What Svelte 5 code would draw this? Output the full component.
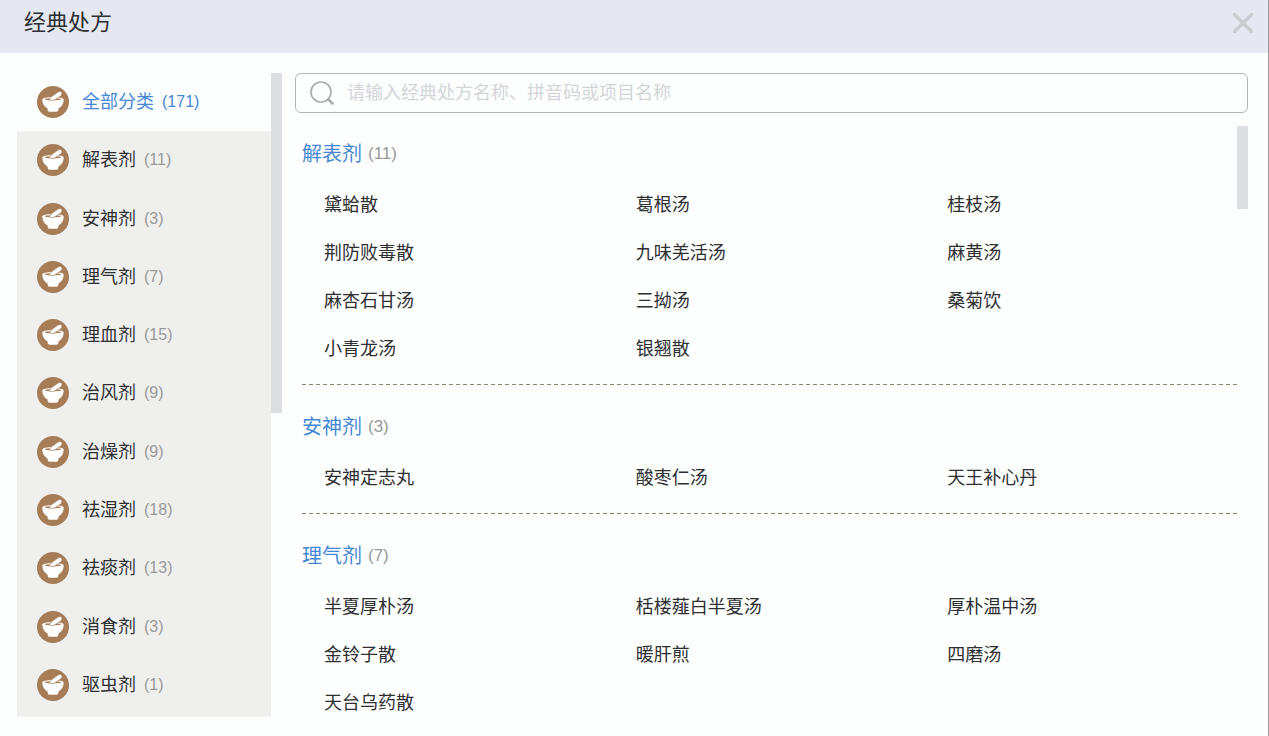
<script lang="ts">
	let keyword = $state('');
	let active = $state('全部分类');

	const categories = [
		{ name: '全部分类', count: 171 },
		{ name: '解表剂', count: 11 },
		{ name: '安神剂', count: 3 },
		{ name: '理气剂', count: 7 },
		{ name: '理血剂', count: 15 },
		{ name: '治风剂', count: 9 },
		{ name: '治燥剂', count: 9 },
		{ name: '祛湿剂', count: 18 },
		{ name: '祛痰剂', count: 13 },
		{ name: '消食剂', count: 3 },
		{ name: '驱虫剂', count: 1 }
	];

	const groups = [
		{
			name: '解表剂',
			items: ['黛蛤散', '葛根汤', '桂枝汤', '荆防败毒散', '九味羌活汤', '麻黄汤', '麻杏石甘汤', '三拗汤', '桑菊饮', '小青龙汤', '银翘散']
		},
		{ name: '安神剂', items: ['安神定志丸', '酸枣仁汤', '天王补心丹'] },
		{
			name: '理气剂',
			items: ['半夏厚朴汤', '栝楼薤白半夏汤', '厚朴温中汤', '金铃子散', '暖肝煎', '四磨汤', '天台乌药散']
		}
	];

	const shown = $derived(
		groups
			.filter((g) => active === '全部分类' || g.name === active)
			.map((g) => ({ ...g, count: g.items.length, items: g.items.filter((i) => i.includes(keyword)) }))
	);
</script>

<div class="dialog">
	<header class="header">
		<h1 class="title">经典处方</h1>
		<button class="close" type="button" aria-label="关闭">
			<svg viewBox="0 0 22 22" width="22" height="22">
				<path d="M2.5 2.5 19.5 19.5M19.5 2.5 2.5 19.5" />
			</svg>
		</button>
	</header>

	<div class="body">
		<nav class="sidebar">
			{#each categories as cat}
				<button
					class="category"
					class:active={cat.name === active}
					type="button"
					onclick={() => (active = cat.name)}
				>
					<svg class="bowl" viewBox="0 0 32 32" width="32" height="32">
						<circle cx="16" cy="16" r="16" fill="#a67d57" />
						<path
							d="M5.3 13.6C5.3 11.9 10 10.9 16 10.9S26.7 11.9 26.7 13.6C26.7 18 24.6 20.8 21.4 22.5V23.6C21.4 25 20.5 25.8 19.2 25.8H12.8C11.5 25.8 10.6 25 10.6 23.6V22.5C7.4 20.8 5.3 18 5.3 13.6Z"
							fill="#fff"
						/>
						<ellipse cx="16" cy="13.2" rx="8.2" ry="1" fill="#a67d57" />
						<path
							d="M12.4 14.2C12.8 12.4 14 11.2 15.2 10.2L20.8 6.2C22.2 5.2 23.8 5.2 24.6 6.3C25.3 7.4 24.9 9 23.6 9.9L18.4 13.4C16.6 14.6 14.4 14.8 12.4 14.2Z"
							fill="#fff"
							stroke="#a67d57"
							stroke-width="0.6"
						/>
					</svg>
					<span class="category-name">{cat.name}</span>
					<span class="category-count">({cat.count})</span>
				</button>
			{/each}
		</nav>
		<div class="side-thumb"></div>

		<main class="main">
			<label class="search">
				<svg class="search-icon" viewBox="0 0 26 26" width="26" height="26" aria-hidden="true">
					<circle cx="12" cy="12" r="10" />
					<path d="M19.4 19.4 23.6 23.6" />
				</svg>
				<input type="text" aria-label="搜索" placeholder="请输入经典处方名称、拼音码或项目名称" bind:value={keyword} />
			</label>

			<div class="results">
				<div class="groups">
					{#each shown as group}
						<section class="group">
							<h2 class="group-title">{group.name}<span class="group-count">({group.count})</span></h2>
							<div class="items">
								{#each group.items as item}
									<button class="item" type="button">{item}</button>
								{/each}
							</div>
						</section>
					{/each}
				</div>
				<div class="main-thumb"></div>
			</div>
		</main>
	</div>
</div>

<style>
	:global(body) {
		margin: 0;
		background: #fdfefe;
	}

	.dialog {
		box-sizing: border-box;
		display: flex;
		flex-direction: column;
		min-height: 100vh;
		border-right: 1px solid #999;
		font-family: 'Liberation Sans', 'Noto Sans CJK SC', sans-serif;
		color: #2e2f31;
	}
	button {
		padding: 0;
		border: 0;
		background: none;
		font: inherit;
		color: inherit;
		text-align: left;
		cursor: pointer;
	}

	/* Header */
	.header {
		box-sizing: border-box;
		display: flex;
		align-items: center;
		justify-content: space-between;
		height: 53px;
		padding: 0 14px 8px 24px;
		background: #e5e8f1;
	}
	.title {
		margin: 0;
		font-size: 22px;
		font-weight: 400;
		line-height: 32px;
	}
	.close { display: flex; }
	.close svg {
		fill: none;
		stroke: #c9cbcf;
		stroke-width: 3.4;
		stroke-linecap: round;
	}

	.body {
		flex: 1;
		display: flex;
		padding: 20px 20px 0 17px;
	}

	/* Category list */
	.sidebar {
		box-sizing: border-box;
		flex: none;
		display: flex;
		flex-direction: column;
		width: 254px;
		margin-bottom: 19px;
		padding-bottom: 3px;
		background: #efefee;
	}
	.category {
		flex: 1;
		display: flex;
		align-items: center;
		min-height: 58px;
		padding-left: 20px;
		line-height: 28px;
	}
	.category.active {
		background: #fdfefe;
		color: #4487d5;
	}
	.bowl { margin-right: 13px; }
	.category-name {
		margin-right: 8px;
		font-size: 18px;
	}
	.category-count {
		font-size: 16px;
		color: #999;
	}
	.active .category-count { color: inherit; }
	.side-thumb {
		flex: none;
		width: 11px;
		height: 340px;
		background: #dddee1;
	}

	/* Search */
	.main {
		flex: 1;
		min-width: 0;
		margin-left: 13px;
	}
	.search {
		box-sizing: border-box;
		display: flex;
		align-items: center;
		height: 40px;
		padding: 0 13px;
		border: 1px solid #b3b5b8;
		border-radius: 6px;
	}
	.search-icon {
		flex: none;
		margin-right: 12px;
		fill: none;
		stroke: #a8aaad;
		stroke-width: 1.6;
		stroke-linecap: round;
	}
	.search-icon path { stroke-width: 2.6; }
	.search input {
		flex: 1;
		min-width: 0;
		padding: 0;
		border: 0;
		outline: 0;
		background: none;
		font-family: inherit;
		font-size: 18px;
		line-height: 28px;
		color: inherit;
	}
	.search input::placeholder { color: #d3d5d8; }

	/* Prescriptions */
	.results {
		display: flex;
		padding: 13px 0 0 7px;
	}
	.groups {
		flex: 1;
		min-width: 0;
	}
	.group + .group {
		padding-top: 14px;
	}
	.group:not(:last-child)::after {
		content: '';
		display: block;
		height: 1px;
		margin-top: 13px;
		background: repeating-linear-gradient(to right, #94836c 0 4px, transparent 4px 7px);
	}
	.group-title {
		box-sizing: border-box;
		display: flex;
		gap: 6px;
		height: 53px;
		margin: 0;
		padding-top: 14px;
		font-size: 20px;
		font-weight: 400;
		line-height: 28px;
		color: #4487d5;
	}
	.group-count {
		font-size: 17px;
		color: #999;
	}
	.items {
		display: grid;
		grid-template-columns: repeat(3, 1fr);
		grid-auto-rows: 48px;
	}
	.item {
		padding-left: 22px;
		font-size: 18px;
	}
	.main-thumb {
		flex: none;
		width: 11px;
		height: 83px;
		background: #dddee1;
	}
</style>
